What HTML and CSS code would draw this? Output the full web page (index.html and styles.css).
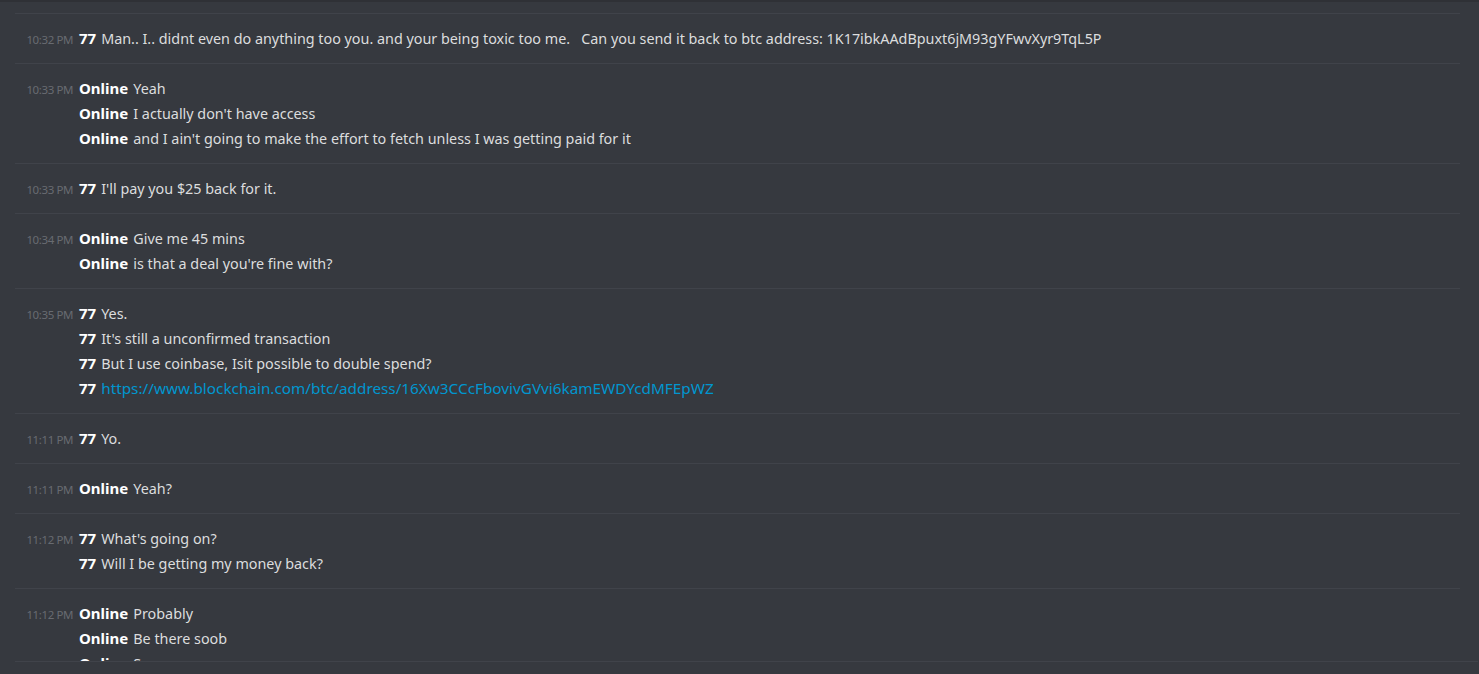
FILE: index.html
```html
<!DOCTYPE html>
<html>
<head>
<meta charset="utf-8">
<link rel="stylesheet" href="styles.css">
</head>
<body>
<div class="app">
  <div class="topstrip"></div>
  <div class="messages">
    <div class="group">
      <div class="line"><span class="time">10:32 PM</span><span class="name">77</span><span class="text">Man.. I.. didnt even do anything too you. and your being toxic too me. &nbsp; Can you send it back to btc address: 1K17ibkAAdBpuxt6jM93gYFwvXyr9TqL5P</span></div>
    </div>
    <div class="group">
      <div class="line"><span class="time">10:33 PM</span><span class="name">Online</span><span class="text">Yeah</span></div>
      <div class="line"><span class="time"></span><span class="name">Online</span><span class="text">I actually don't have access</span></div>
      <div class="line"><span class="time"></span><span class="name">Online</span><span class="text">and I ain't going to make the effort to fetch unless I was getting paid for it</span></div>
    </div>
    <div class="group">
      <div class="line"><span class="time">10:33 PM</span><span class="name">77</span><span class="text">I'll pay you $25 back for it.</span></div>
    </div>
    <div class="group">
      <div class="line"><span class="time">10:34 PM</span><span class="name">Online</span><span class="text">Give me 45 mins</span></div>
      <div class="line"><span class="time"></span><span class="name">Online</span><span class="text">is that a deal you're fine with?</span></div>
    </div>
    <div class="group">
      <div class="line"><span class="time">10:35 PM</span><span class="name">77</span><span class="text">Yes.</span></div>
      <div class="line"><span class="time"></span><span class="name">77</span><span class="text">It's still a unconfirmed transaction</span></div>
      <div class="line"><span class="time"></span><span class="name">77</span><span class="text">But I use coinbase, Isit possible to double spend?</span></div>
      <div class="line"><span class="time"></span><span class="name">77</span><a class="text link" href="#">https://www.blockchain.com/btc/address/16Xw3CCcFbovivGVvi6kamEWDYcdMFEpWZ</a></div>
    </div>
    <div class="group">
      <div class="line"><span class="time">11:11 PM</span><span class="name">77</span><span class="text">Yo.</span></div>
    </div>
    <div class="group">
      <div class="line"><span class="time">11:11 PM</span><span class="name">Online</span><span class="text">Yeah?</span></div>
    </div>
    <div class="group">
      <div class="line"><span class="time">11:12 PM</span><span class="name">77</span><span class="text">What's going on?</span></div>
      <div class="line"><span class="time"></span><span class="name">77</span><span class="text">Will I be getting my money back?</span></div>
    </div>
    <div class="group">
      <div class="line"><span class="time">11:12 PM</span><span class="name">Online</span><span class="text">Probably</span></div>
      <div class="line"><span class="time"></span><span class="name">Online</span><span class="text">Be there soob</span></div>
      <div class="line"><span class="time"></span><span class="name">Online</span><span class="text">Soon</span></div>
    </div>
  </div>
  <div class="footer"></div>
</div>
</body>
</html>
```

FILE: styles.css
```css
html, body {
  margin: 0;
  padding: 0;
  background: #36393f;
  height: 100%;
  overflow: hidden;
}
.app {
  display: flex;
  flex-direction: column;
  height: 674px;
  font-family: "Noto Sans", "Open Sans", sans-serif;
}
.topstrip {
  height: 2px;
  background: #2f3136;
  flex: none;
}
.messages {
  height: 659px;
  overflow: hidden;
  padding-top: 11px;
  box-sizing: border-box;
  flex: none;
}
.group {
  margin: 0 19px 0 15px;
  border-top: 1px solid #40434a;
  padding: 12px 0 12px;
}
.line {
  display: flex;
  align-items: baseline;
  height: 25px;
  line-height: 25px;
  white-space: nowrap;
}
.time {
  width: 58px;
  flex: none;
  text-align: right;
  font-size: 11.5px;
  color: #686b71;
  letter-spacing: -0.4px;
}
.name {
  margin-left: 6px;
  font-size: 15px;
  font-weight: 700;
  color: #ffffff;
  margin-right: 5px;
}
.text {
  font-size: 14.35px;
  color: #dcddde;
}
.link {
  color: #0096cf;
  text-decoration: none;
  font-size: 15.3px;
}
.footer {
  border-top: 1px solid #40434a;
  margin-left: 15px;
  margin-right: 1px;
  flex: 1;
}
```
